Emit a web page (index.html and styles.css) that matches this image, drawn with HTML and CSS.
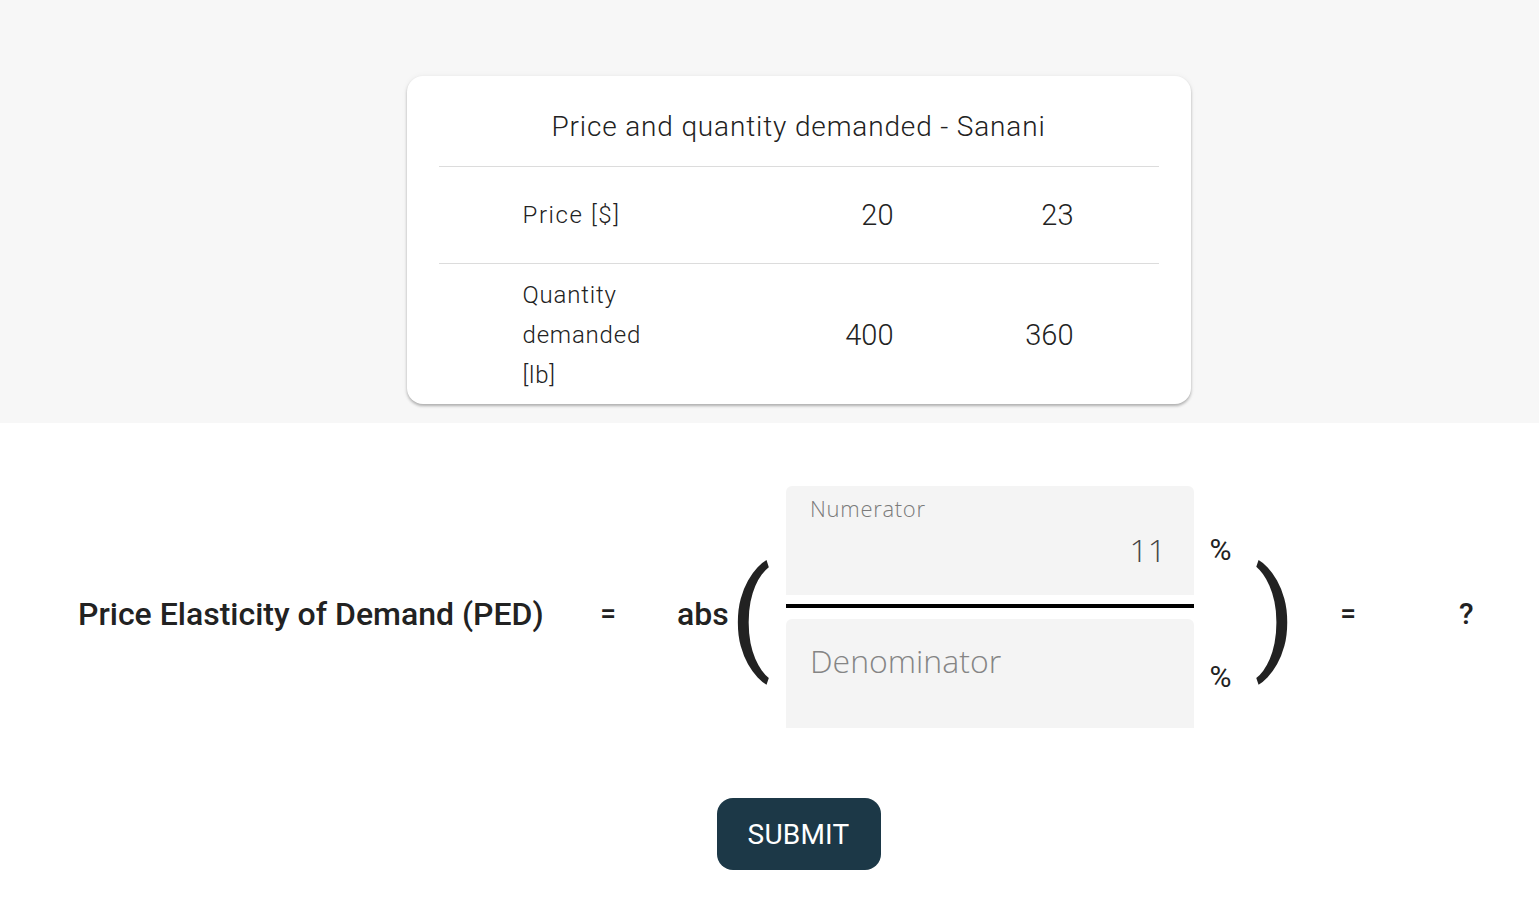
FILE: index.html
```html
<!DOCTYPE html>
<html lang="en">
<head>
<meta charset="utf-8">
<title>Price Elasticity of Demand</title>
<link rel="stylesheet" href="styles.css">
</head>
<body>
  <section class="top">
    <div class="card">
      <h2 class="card-title">Price and quantity demanded - Sanani</h2>
      <div class="trow row-price">
        <div class="tlabel">Price [$]</div>
        <div class="tnum">20</div>
        <div class="tnum">23</div>
      </div>
      <div class="trow row-qty">
        <div class="tlabel">Quantity demanded [lb]</div>
        <div class="tnum">400</div>
        <div class="tnum">360</div>
      </div>
    </div>
  </section>

  <section class="bottom">
    <div class="formula">
      <div class="ftext ped">Price Elasticity of Demand (PED)</div>
      <div class="ftext eq eq-first">=</div>
      <div class="ftext abs">abs</div>
      <div class="paren paren-open">(</div>
      <div class="fraction">
        <div class="frac-row">
          <div class="field field-num">
            <div class="field-label">Numerator</div>
            <div class="field-value">11</div>
          </div>
          <span class="pct pct-num">%</span>
        </div>
        <div class="bar"></div>
        <div class="frac-row">
          <div class="field field-den">
            <div class="field-placeholder">Denominator</div>
          </div>
          <span class="pct pct-den">%</span>
        </div>
      </div>
      <div class="paren paren-close">)</div>
      <div class="ftext eq eq-second">=</div>
      <div class="ftext result">?</div>
    </div>
    <div class="actions">
      <button class="submit" type="button">SUBMIT</button>
    </div>
  </section>
</body>
</html>
```
FILE: styles.css
```css
html, body {
  margin: 0;
  padding: 0;
}
body {
  background: #ffffff;
  font-family: Roboto, "Liberation Sans", sans-serif;
  color: #222222;
}

.top {
  background: #f7f7f7;
  padding: 76px 0 19px 58px;
  display: flex;
  justify-content: center;
}

.card {
  width: 784px;
  box-sizing: border-box;
  background: #ffffff;
  border-radius: 16px;
  padding: 32px 32px 0;
  box-shadow: 0 2px 3px rgba(0, 0, 0, 0.28), 0 0 6px rgba(0, 0, 0, 0.05);
}

.card-title {
  margin: 0;
  padding-bottom: 20px;
  border-bottom: 1px solid #dcdcdc;
  text-align: center;
  font-size: 28px;
  line-height: 38px;
  font-weight: 300;
  color: #222222;
  letter-spacing: 0.85px;
}

.trow {
  display: grid;
  grid-template-columns: 130px 1fr 180px;
  align-items: center;
  padding: 0 85px 0 84px;
  color: #222222;
  font-weight: 300;
}
.row-price {
  height: 96px;
  border-bottom: 1px solid #dcdcdc;
}
.row-qty {
  padding-top: 11px;
  padding-bottom: 9px;
}
.tlabel {
  font-size: 24px;
  line-height: 40px;
  letter-spacing: 0.8px;
}
.row-price .tlabel {
  letter-spacing: 1.6px;
}
.tnum {
  font-size: 29px;
  text-align: right;
  line-height: 40px;
}

.bottom {
  padding-top: 63px;
}

.formula {
  display: flex;
  align-items: flex-start;
  padding-left: 78px;
}

.ftext {
  font-size: 32px;
  line-height: 40px;
  font-weight: 500;
  margin-top: 108px;
  white-space: nowrap;
  color: #222222;
}
.ped {
  width: 464px;
  letter-spacing: 0;
}
.eq {
  width: 56px;
  text-align: center;
  font-size: 28px;
}
.eq-first {
  margin-left: 38px;
}
.abs {
  width: 50px;
  margin-left: 41px;
  text-align: right;
}
.eq-second {
  margin-left: 38px;
}
.result {
  width: 14px;
  margin-left: 83px;
  text-align: center;
  font-size: 30px;
}

.paren {
  width: 28px;
  font-size: 120px;
  line-height: 118px;
  font-weight: 400;
  color: #222222;
  text-align: center;
  margin-top: 71px;
}
.paren-open {
  margin-left: 3px;
}
.paren-close {
  margin-left: 22px;
}

.fraction {
  margin-left: 28px;
  display: flex;
  flex-direction: column;
}
.frac-row {
  display: flex;
  align-items: flex-start;
}
.field {
  width: 408px;
  height: 109px;
  box-sizing: border-box;
  background: #f4f4f4;
  border-radius: 6px 6px 0 0;
  font-family: "Open Sans", "Liberation Sans", sans-serif;
  font-weight: 300;
}
.field-num {
  padding: 10px 28px 0 24px;
}
.field-label {
  font-size: 22px;
  line-height: 24px;
  color: #7a7a7a;
  letter-spacing: 0.7px;
}
.field-value {
  margin-top: 10px;
  font-size: 32px;
  line-height: 40px;
  text-align: right;
  color: #444444;
}
.field-den {
  padding: 22px 24px 0;
}
.field-placeholder {
  font-size: 32px;
  line-height: 40px;
  color: #858585;
}
.bar {
  width: 408px;
  height: 4px;
  background: #000000;
  margin: 9px 0 11px;
}
.pct {
  width: 23px;
  margin-left: 15px;
  font-size: 30px;
  line-height: 40px;
  text-align: center;
  color: #222222;
}
.pct-num {
  margin-top: 44px;
}
.pct-den {
  margin-top: 38px;
}

.actions {
  display: flex;
  justify-content: center;
  padding: 70px 0 49px 58px;
}
.submit {
  width: 164px;
  height: 72px;
  border: none;
  border-radius: 16px;
  background: #1c3847;
  color: #ffffff;
  font-family: Roboto, "Liberation Sans", sans-serif;
  font-size: 28px;
  font-weight: 400;
  letter-spacing: 0.2px;
  cursor: pointer;
}
```
